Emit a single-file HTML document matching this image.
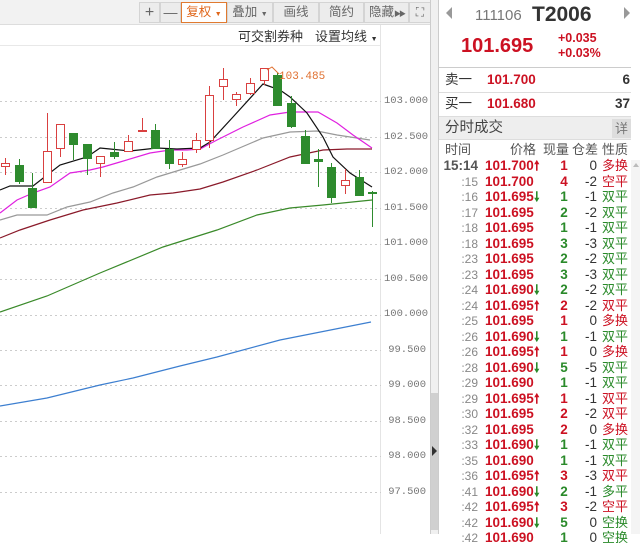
<!DOCTYPE html>
<html><head><meta charset="utf-8"><style>
*{margin:0;padding:0;box-sizing:border-box}
body{width:640px;height:534px;overflow:hidden;background:#fff;font-family:"Liberation Sans","Noto Sans CJK SC",sans-serif;position:relative}
.a{position:absolute;white-space:nowrap;line-height:1.2}
.tb{position:absolute;top:2px;height:21px;border:1px solid #d4d4d4;background:#ececec;color:#666;font-size:12.5px;line-height:19px;text-align:center;white-space:nowrap;overflow:hidden}
.ax{position:absolute;left:384px;width:42px;text-align:right;font-family:"Liberation Mono",monospace;font-size:10.5px;color:#777;line-height:12px}
.r{color:#cc1122}.g{color:#2a8a2a}
.row{position:absolute;left:439px;width:192px;height:16px;font-size:13.5px;font-weight:bold;line-height:16px}
.row span{position:absolute;white-space:nowrap}
.t{right:153px;font-weight:normal;color:#888;font-size:12px}
.p{left:46px}
.ar{left:95px;font-size:13px}
.q{left:114px;width:22px;text-align:center}
.d{right:34px;font-weight:normal;color:#333}
.n{left:163px;font-weight:normal;font-size:13px}
</style></head><body>
<div class="a" style="left:0;top:0;width:431px;height:25px;background:#f2f2f2;border-bottom:1px solid #ddd"></div>
<div class="tb" style="left:139px;width:21px;font-size:16px">+</div>
<div class="tb" style="left:160px;width:21px;font-size:14px">—</div>
<div class="tb" style="left:181px;width:46px;border:1px solid #e07a30;background:#fff;color:#e0661a">复权 <span style="font-size:7px">▼</span></div>
<div class="tb" style="left:227px;width:46px">叠加 <span style="font-size:7px">▼</span></div>
<div class="tb" style="left:273px;width:46px">画线</div>
<div class="tb" style="left:319px;width:45px">简约</div>
<div class="tb" style="left:364px;width:45px">隐藏<span style="font-size:7px;letter-spacing:-2px"> ▶▶</span></div>
<div class="tb" style="left:409px;width:22px;font-size:12px">⛶</div>
<div class="a" style="left:238px;top:29px;font-size:13px;color:#333">可交割券种</div>
<div class="a" style="left:315px;top:29px;font-size:13px;color:#333">设置均线 <span style="font-size:7px">▼</span></div>
<div class="a" style="left:0;top:45px;width:380px;height:1px;background:#e8e8e8"></div>
<div class="a" style="left:380px;top:25px;width:1px;height:509px;background:#e4e4e4"></div>
<div class="a" style="left:430px;top:0;width:1px;height:534px;background:#ccc"></div>
<div class="a" style="left:431px;top:0;width:8px;height:534px;background:#f0f0f0"></div>
<div class="a" style="left:431px;top:393px;width:7px;height:137px;background:#d0d0d0"></div>
<div class="a" style="left:432px;top:446px;width:0;height:0;border-left:5px solid #333;border-top:5px solid transparent;border-bottom:5px solid transparent"></div>
<div class="a" style="left:438px;top:0;width:1px;height:534px;background:#ccc"></div>
<svg class="a" style="left:0;top:0" width="381" height="534">
<g stroke="#ccc" stroke-dasharray="2,3" stroke-width="1">
<line x1="0" y1="101.5" x2="381" y2="101.5"/><line x1="0" y1="137.5" x2="381" y2="137.5"/><line x1="0" y1="172.5" x2="381" y2="172.5"/><line x1="0" y1="208.5" x2="381" y2="208.5"/><line x1="0" y1="244.5" x2="381" y2="244.5"/><line x1="0" y1="279.5" x2="381" y2="279.5"/><line x1="0" y1="315.5" x2="381" y2="315.5"/><line x1="0" y1="350.5" x2="381" y2="350.5"/><line x1="0" y1="385.5" x2="381" y2="385.5"/><line x1="0" y1="421.5" x2="381" y2="421.5"/><line x1="0" y1="456.5" x2="381" y2="456.5"/><line x1="0" y1="492.5" x2="381" y2="492.5"/>
</g>
<g fill="none" stroke-width="1.2">
<polyline stroke="#3d7fd0" points="0,406 47,398 100,385 133,378 180,366 217,357 280,340 371,322"/>
<polyline stroke="#3a8a2a" points="0,312 47,296 100,273 163,247 217,230 257,215 290,208 323,205 372,200"/>
<polyline stroke="#8a1a2a" points="0,238 20,230 50,220 83,210 117,203 150,195 173,193 200,189 223,182 257,170 290,157 323,150 347,149 372,149"/>
<polyline stroke="#999" points="0,220 17,215 47,215 67,207 90,202 113,193 133,187 157,177 180,170 200,164 223,155 263,138 290,132 317,131 337,135 370,140"/>
<polyline stroke="#e020e0" points="0,213 17,200 33,193 50,187 70,173 90,170 103,167 120,162 150,153 170,150 187,150 200,149 217,140 243,127 270,115 290,112 318,112 337,123 353,135 372,148"/>
<polyline stroke="#111" points="0,190 10,186 33,186 60,165 87,157 100,148 110,149 130,151 157,148 177,149 200,148 210,142 233,117 263,84 280,90 290,97 307,113 323,137 333,157 350,173 372,187"/>
</g>
<g stroke="#d94040" fill="#fff" stroke-width="1">
<line x1="5.5" y1="158" x2="5.5" y2="175"/><rect x="1.5" y="163.5" width="8" height="3"/>
<line x1="47.5" y1="113" x2="47.5" y2="183"/><rect x="43.5" y="151.5" width="8" height="31"/>
<line x1="60.5" y1="124" x2="60.5" y2="157"/><rect x="56.5" y="124.5" width="8" height="24"/>
<line x1="100.5" y1="156" x2="100.5" y2="177"/><rect x="96.5" y="156.5" width="8" height="7"/>
<line x1="128.5" y1="135" x2="128.5" y2="152"/><rect x="124.5" y="141.5" width="8" height="10"/>
<line x1="142.5" y1="118" x2="142.5" y2="132"/><rect x="138.5" y="130.5" width="8" height="1"/>
<line x1="182.5" y1="152" x2="182.5" y2="167"/><rect x="178.5" y="159.5" width="8" height="5"/>
<line x1="196.5" y1="133" x2="196.5" y2="153"/><rect x="192.5" y="140.5" width="8" height="9"/>
<line x1="209.5" y1="86" x2="209.5" y2="148"/><rect x="205.5" y="95.5" width="8" height="45"/>
<line x1="223.5" y1="68" x2="223.5" y2="100"/><rect x="219.5" y="79.5" width="8" height="7"/>
<line x1="236.5" y1="92" x2="236.5" y2="106"/><rect x="232.5" y="94.5" width="8" height="5"/>
<line x1="250.5" y1="78" x2="250.5" y2="95"/><rect x="246.5" y="83.5" width="8" height="10"/>
<line x1="264.5" y1="68" x2="264.5" y2="85"/><rect x="260.5" y="68.5" width="8" height="12"/>
<line x1="345.5" y1="169" x2="345.5" y2="194"/><rect x="341.5" y="180.5" width="8" height="5"/>
</g>
<g stroke="#2e8b2e" fill="#2e8b2e" stroke-width="1">
<line x1="19.5" y1="159" x2="19.5" y2="184"/><rect x="15.5" y="165.5" width="8" height="16"/>
<line x1="32.5" y1="173" x2="32.5" y2="207"/><rect x="28.5" y="188.5" width="8" height="19"/>
<line x1="73.5" y1="133" x2="73.5" y2="160"/><rect x="69.5" y="133.5" width="8" height="11"/>
<line x1="87.5" y1="144" x2="87.5" y2="175"/><rect x="83.5" y="144.5" width="8" height="14"/>
<line x1="114.5" y1="142" x2="114.5" y2="159"/><rect x="110.5" y="152.5" width="8" height="4"/>
<line x1="155.5" y1="124" x2="155.5" y2="148"/><rect x="151.5" y="130.5" width="8" height="18"/>
<line x1="169.5" y1="140" x2="169.5" y2="169"/><rect x="165.5" y="149.5" width="8" height="14"/>
<line x1="277.5" y1="73" x2="277.5" y2="106"/><rect x="273.5" y="75.5" width="8" height="30"/>
<line x1="291.5" y1="96" x2="291.5" y2="128"/><rect x="287.5" y="103.5" width="8" height="23"/>
<line x1="305.5" y1="130" x2="305.5" y2="164"/><rect x="301.5" y="136.5" width="8" height="27"/>
<line x1="318.5" y1="149" x2="318.5" y2="187"/><rect x="314.5" y="159.5" width="8" height="2"/>
<line x1="331.5" y1="163" x2="331.5" y2="203"/><rect x="327.5" y="167.5" width="8" height="30"/>
<line x1="359.5" y1="170" x2="359.5" y2="195"/><rect x="355.5" y="177.5" width="8" height="18"/>
<line x1="372.5" y1="191" x2="372.5" y2="227"/><rect x="368.5" y="192.5" width="8" height="1"/>
</g>
<polyline fill="none" stroke="#e07030" points="267,70 272,67 279,74"/>
<text x="279" y="79" font-family="Liberation Mono,monospace" font-size="11" fill="#e07030">103.485</text>
</svg>
<div class="ax" style="top:95px">103.000</div>
<div class="ax" style="top:131px">102.500</div>
<div class="ax" style="top:166px">102.000</div>
<div class="ax" style="top:202px">101.500</div>
<div class="ax" style="top:237px">101.000</div>
<div class="ax" style="top:273px">100.500</div>
<div class="ax" style="top:308px">100.000</div>
<div class="ax" style="top:344px">99.500</div>
<div class="ax" style="top:379px">99.000</div>
<div class="ax" style="top:415px">98.500</div>
<div class="ax" style="top:450px">98.000</div>
<div class="ax" style="top:486px">97.500</div>
<div class="a" style="left:446px;top:7px;width:0;height:0;border-right:6px solid #999;border-top:6px solid transparent;border-bottom:6px solid transparent"></div>
<div class="a" style="left:624px;top:7px;width:0;height:0;border-left:6px solid #999;border-top:6px solid transparent;border-bottom:6px solid transparent"></div>
<div class="a" style="left:475px;top:7px;font-size:15px;color:#777">111106</div>
<div class="a" style="left:532px;top:2px;font-size:21px;font-weight:bold;color:#333">T2006</div>
<div class="a r" style="left:461px;top:34px;font-size:20px;font-weight:bold">101.695</div>
<div class="a r" style="left:558px;top:31px;font-size:12.5px;font-weight:bold">+0.035</div>
<div class="a r" style="left:558px;top:46px;font-size:12.5px;font-weight:bold">+0.03%</div>
<div class="a" style="left:439px;top:67px;width:192px;height:1px;background:#ccc"></div>
<div class="a" style="left:445px;top:72px;font-size:13.5px;line-height:16px;color:#333">卖一</div>
<div class="a r" style="left:487px;top:72px;font-size:13.5px;line-height:16px;font-weight:bold">101.700</div>
<div class="a" style="left:600px;top:72px;width:30px;text-align:right;font-size:13.5px;line-height:16px;font-weight:bold;color:#333">6</div>
<div class="a" style="left:439px;top:92px;width:192px;height:1px;background:#ddd"></div>
<div class="a" style="left:445px;top:96px;font-size:13.5px;line-height:16px;color:#333">买一</div>
<div class="a r" style="left:487px;top:96px;font-size:13.5px;line-height:16px;font-weight:bold">101.680</div>
<div class="a" style="left:600px;top:96px;width:30px;text-align:right;font-size:13.5px;line-height:16px;font-weight:bold;color:#333">37</div>
<div class="a" style="left:439px;top:116px;width:192px;height:24px;background:#eee;border-top:1px solid #ddd;border-bottom:1px solid #ddd"></div>
<div class="a" style="left:445px;top:120px;font-size:14.5px;line-height:17px;color:#444">分时成交</div>
<div class="a" style="left:612px;top:119px;width:19px;height:19px;background:#ddd;color:#777;font-size:13px;text-align:center;line-height:19px">详</div>
<div class="a" style="left:445px;top:142px;font-size:13px;line-height:15px;color:#555">时间</div>
<div class="a" style="left:510px;top:142px;font-size:13px;line-height:15px;color:#555">价格</div>
<div class="a" style="left:543px;top:142px;font-size:13px;line-height:15px;color:#555">现量</div>
<div class="a" style="left:572px;top:142px;font-size:13px;line-height:15px;color:#555">仓差</div>
<div class="a" style="left:602px;top:142px;font-size:13px;line-height:15px;color:#555">性质</div>
<div class="a" style="left:631px;top:160px;width:9px;height:374px;background:#f4f4f4"></div>
<div class="a" style="left:633px;top:163px;width:0;height:0;border-bottom:4px solid #bbb;border-left:3px solid transparent;border-right:3px solid transparent"></div>

<div class="row" style="top:158px"><span class="t" style="color:#555;font-size:13.5px;font-weight:bold">15:14</span><span class="p r">101.700</span><span class="ar r">🠕</span><span class="q r">1</span><span class="d">0</span><span class="n r">多换</span></div>
<div class="row" style="top:173.5px"><span class="t">:15</span><span class="p r">101.700</span><span class="q r">4</span><span class="d">-2</span><span class="n r">空平</span></div>
<div class="row" style="top:189px"><span class="t">:16</span><span class="p r">101.695</span><span class="ar g">🠗</span><span class="q g">1</span><span class="d">-1</span><span class="n g">双平</span></div>
<div class="row" style="top:204.5px"><span class="t">:17</span><span class="p r">101.695</span><span class="q g">2</span><span class="d">-2</span><span class="n g">双平</span></div>
<div class="row" style="top:220px"><span class="t">:18</span><span class="p r">101.695</span><span class="q g">1</span><span class="d">-1</span><span class="n g">双平</span></div>
<div class="row" style="top:235.5px"><span class="t">:18</span><span class="p r">101.695</span><span class="q g">3</span><span class="d">-3</span><span class="n g">双平</span></div>
<div class="row" style="top:251px"><span class="t">:23</span><span class="p r">101.695</span><span class="q g">2</span><span class="d">-2</span><span class="n g">双平</span></div>
<div class="row" style="top:266.5px"><span class="t">:23</span><span class="p r">101.695</span><span class="q g">3</span><span class="d">-3</span><span class="n g">双平</span></div>
<div class="row" style="top:282px"><span class="t">:24</span><span class="p r">101.690</span><span class="ar g">🠗</span><span class="q g">2</span><span class="d">-2</span><span class="n g">双平</span></div>
<div class="row" style="top:297.5px"><span class="t">:24</span><span class="p r">101.695</span><span class="ar r">🠕</span><span class="q r">2</span><span class="d">-2</span><span class="n r">双平</span></div>
<div class="row" style="top:313px"><span class="t">:25</span><span class="p r">101.695</span><span class="q r">1</span><span class="d">0</span><span class="n r">多换</span></div>
<div class="row" style="top:328.5px"><span class="t">:26</span><span class="p r">101.690</span><span class="ar g">🠗</span><span class="q g">1</span><span class="d">-1</span><span class="n g">双平</span></div>
<div class="row" style="top:344px"><span class="t">:26</span><span class="p r">101.695</span><span class="ar r">🠕</span><span class="q r">1</span><span class="d">0</span><span class="n r">多换</span></div>
<div class="row" style="top:359.5px"><span class="t">:28</span><span class="p r">101.690</span><span class="ar g">🠗</span><span class="q g">5</span><span class="d">-5</span><span class="n g">双平</span></div>
<div class="row" style="top:375px"><span class="t">:29</span><span class="p r">101.690</span><span class="q g">1</span><span class="d">-1</span><span class="n g">双平</span></div>
<div class="row" style="top:390.5px"><span class="t">:29</span><span class="p r">101.695</span><span class="ar r">🠕</span><span class="q r">1</span><span class="d">-1</span><span class="n r">双平</span></div>
<div class="row" style="top:406px"><span class="t">:30</span><span class="p r">101.695</span><span class="q r">2</span><span class="d">-2</span><span class="n r">双平</span></div>
<div class="row" style="top:421.5px"><span class="t">:32</span><span class="p r">101.695</span><span class="q r">2</span><span class="d">0</span><span class="n r">多换</span></div>
<div class="row" style="top:437px"><span class="t">:33</span><span class="p r">101.690</span><span class="ar g">🠗</span><span class="q g">1</span><span class="d">-1</span><span class="n g">双平</span></div>
<div class="row" style="top:452.5px"><span class="t">:35</span><span class="p r">101.690</span><span class="q g">1</span><span class="d">-1</span><span class="n g">双平</span></div>
<div class="row" style="top:468px"><span class="t">:36</span><span class="p r">101.695</span><span class="ar r">🠕</span><span class="q r">3</span><span class="d">-3</span><span class="n r">双平</span></div>
<div class="row" style="top:483.5px"><span class="t">:41</span><span class="p r">101.690</span><span class="ar g">🠗</span><span class="q g">2</span><span class="d">-1</span><span class="n g">多平</span></div>
<div class="row" style="top:499px"><span class="t">:42</span><span class="p r">101.695</span><span class="ar r">🠕</span><span class="q r">3</span><span class="d">-2</span><span class="n r">空平</span></div>
<div class="row" style="top:514.5px"><span class="t">:42</span><span class="p r">101.690</span><span class="ar g">🠗</span><span class="q g">5</span><span class="d">0</span><span class="n g">空换</span></div>
<div class="row" style="top:530px"><span class="t">:42</span><span class="p r">101.690</span><span class="q g">1</span><span class="d">0</span><span class="n g">空换</span></div>
</body></html>
